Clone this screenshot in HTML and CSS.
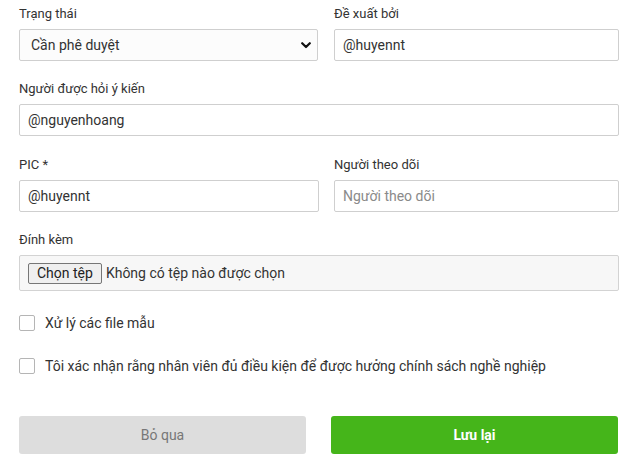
FILE: index.html
```html
<!DOCTYPE html>
<html lang="vi">
<head>
<meta charset="utf-8">
<link rel="stylesheet" href="styles.css">
</head>
<body>
<form class="form">
  <div class="row two">
    <div class="field">
      <label class="label">Trạng thái</label>
      <div class="select-wrap">
        <select class="control select">
          <option>Cần phê duyệt</option>
        </select>
        <svg class="chevron" width="10" height="7" viewBox="0 0 10 7"><path d="M1.2 1.2 L5 5 L8.8 1.2" fill="none" stroke="#111" stroke-width="2.2" stroke-linecap="round" stroke-linejoin="round"/></svg>
      </div>
    </div>
    <div class="field">
      <label class="label">Đề xuất bởi</label>
      <input class="control" type="text" value="@huyennt">
    </div>
  </div>

  <div class="row">
    <div class="field">
      <label class="label">Người được hỏi ý kiến</label>
      <input class="control" type="text" value="@nguyenhoang">
    </div>
  </div>

  <div class="row two">
    <div class="field">
      <label class="label">PIC *</label>
      <input class="control" type="text" value="@huyennt">
    </div>
    <div class="field">
      <label class="label">Người theo dõi</label>
      <input class="control" type="text" placeholder="Người theo dõi">
    </div>
  </div>

  <div class="row">
    <div class="field">
      <label class="label">Đính kèm</label>
      <div class="file-box">
        <button type="button" class="file-btn">Chọn tệp</button>
        <span class="file-text">Không có tệp nào được chọn</span>
      </div>
    </div>
  </div>

  <div class="checks">
    <label class="check"><span class="box"></span><span>Xử lý các file mẫu</span></label>
    <label class="check"><span class="box"></span><span>Tôi xác nhận rằng nhân viên đủ điều kiện để được hưởng chính sách nghề nghiệp</span></label>
  </div>

  <div class="actions">
    <button type="button" class="btn btn-cancel">Bỏ qua</button>
    <button type="button" class="btn btn-save">Lưu lại</button>
  </div>
</form>
</body>
</html>
```

FILE: styles.css
```css
* { box-sizing: border-box; }

html, body {
  margin: 0;
  padding: 0;
  background: #fff;
}

body {
  font-family: Roboto, "Noto Sans", sans-serif;
  color: #333;
}

.form {
  width: 600px;
  margin-left: 19px;
  padding-top: 6px;
  display: flex;
  flex-direction: column;
  gap: 20.4px;
}

.row {
  display: grid;
  grid-template-columns: 1fr;
}

.row.two {
  grid-template-columns: 300px 285px;
  gap: 15px;
}

.field {
  display: flex;
  flex-direction: column;
}

.label {
  font-size: 13px;
  line-height: 16px;
  height: 16px;
  margin-bottom: 7px;
  color: #333;
}

.control {
  height: 32px;
  width: 100%;
  border: 1px solid #cfcfcf;
  border-radius: 2px;
  padding: 0 8px;
  font-family: Roboto, "Noto Sans", sans-serif;
  font-size: 14px;
  color: #333;
  background: #fff;
  outline: none;
}

.control::placeholder {
  color: #8a8a8a;
}

.select-wrap {
  position: relative;
  width: 299px;
}

.select {
  -webkit-appearance: none;
  appearance: none;
  padding-left: 11px;
  background: #fcfcfc;
}

.chevron {
  position: absolute;
  right: 7px;
  top: 13px;
}

.file-box {
  height: 36px;
  border: 1px solid #d3d3d3;
  border-radius: 2px;
  background: #f7f7f7;
  display: flex;
  align-items: center;
  padding-left: 8px;
  gap: 4px;
}

.file-btn {
  height: 21px;
  padding: 0 8px;
  border: 1px solid #767676;
  border-radius: 2px;
  background: #efefef;
  font-family: Roboto, "Noto Sans", sans-serif;
  font-size: 14px;
  color: #222;
  line-height: 19px;
}

.file-text {
  font-size: 14px;
  color: #333;
}

.checks {
  display: flex;
  flex-direction: column;
  gap: 27px;
  padding-top: 3.5px;
}

.check {
  display: flex;
  align-items: center;
  gap: 10px;
  font-size: 14px;
  color: #333;
  height: 16px;
}

.box {
  width: 16px;
  height: 16px;
  border: 1px solid #b5b5b5;
  border-radius: 2px;
  background: #fff;
  flex: none;
}

.actions {
  display: grid;
  grid-template-columns: 287px 287px;
  gap: 25px;
  margin-top: 21.6px;
}

.btn {
  height: 38px;
  border: none;
  border-radius: 3px;
  font-family: Roboto, "Noto Sans", sans-serif;
  font-size: 14px;
}

.btn-cancel {
  background: #dddddd;
  color: #777;
}

.btn-save {
  background: #45b51a;
  color: #fff;
  font-weight: bold;
}
```
